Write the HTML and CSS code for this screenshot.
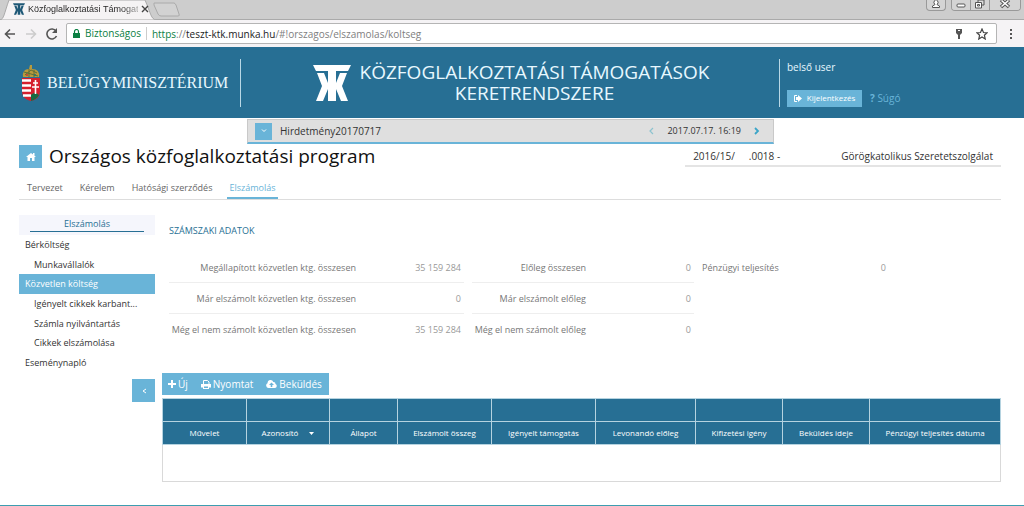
FILE: index.html
```html
<!DOCTYPE html>
<html lang="hu">
<head>
<meta charset="utf-8">
<title>Közfoglalkoztatási Támogatások Keretrendszere</title>
<link rel="stylesheet" href="styles.css">
</head>
<body>
<svg class="defs" aria-hidden="true">
  <symbol id="ktk" viewBox="0 0 38 36"><path d="M0 0H38L35 6H23V36H15V24L10 36H3L9 21L4 8H11L15 18V6H3ZM23 18L27 8H34L29 21L35 36H28L23 24Z" fill="currentColor"/></symbol>
</svg>
<div class="browser">
  <div class="tabstrip">
    <svg class="tab-shape" viewBox="0 0 184 20" aria-hidden="true"><path d="M0 20C4 19 4 14 9 0H145C151 14 151 19 156 20Z" fill="#f5f3f4" stroke="#aaa"/><path d="M154 3H174Q175 3 176 5L179 14Q180 16 178 16H161Q159 16 158 14L154 5Z" fill="#d2d2d2" stroke="#aaa"/></svg>
    <div class="tab"><svg class="favicon"><use href="#ktk"/></svg><span class="tab-title">Közfoglalkoztatási Támogat</span>
      <button class="plain" aria-label="Lap bezárása"><svg width="8" height="8" viewBox="0 0 8 8"><path d="M1 1L7 7M7 1L1 7" stroke="#444" stroke-width="1.4"/></svg></button></div>
    <div class="window-buttons">
      <button class="user-btn" aria-label="Felhasználó"><svg width="18" height="11" viewBox="0 0 18 11"><path d="M5.500 7.500V6L8 4.500A2 2.500 0 1 1 10 4.500L12.500 6V7.500Z" fill="#fff" stroke="#555"/></svg></button>
      <div class="group">
        <button aria-label="Kis méret"><svg width="18" height="11" viewBox="0 0 18 11"><rect x="5" y="4" width="8" height="3" rx="1" fill="#fff" stroke="#555"/></svg></button>
        <button aria-label="Előző méret"><svg width="18" height="11" viewBox="0 0 18 11"><path d="M7 0H13V5H7Z" fill="#ddd" stroke="#555"/><path d="M4.500 2.500H10.500V8H4.500ZM6.500 4.500H8.500V6H6.500Z" fill="#fff" stroke="#555"/></svg></button>
        <button class="wide" aria-label="Bezárás"><svg width="30" height="11" viewBox="0 0 30 11"><path d="M11 0L19 7M19 0L11 7" stroke="#555" stroke-width="3.500"/><path d="M11.500 .5L18.500 6.500M18.500 .5L11.500 6.500" stroke="#fff" stroke-width="1.500"/></svg></button>
      </div>
    </div>
  </div>
  <div class="toolbar">
    <button class="plain" aria-label="Vissza"><svg width="12" height="12" viewBox="0 0 12 12"><path d="M11 6H2M6 1.500L1.500 6L6 10.500" fill="none" stroke="#555" stroke-width="1.600"/></svg></button>
    <button class="plain" aria-label="Előre"><svg width="12" height="12" viewBox="0 0 12 12"><path d="M1 6H10M6 1.500L10.500 6L6 10.500" fill="none" stroke="#ccc" stroke-width="1.600"/></svg></button>
    <button class="plain" aria-label="Újratöltés"><svg width="12" height="12" viewBox="0 0 12 12"><path d="M10 3A5 5 0 1 0 10.500 8" fill="none" stroke="#555" stroke-width="1.600"/><path d="M11 0V5H6Z" fill="#555"/></svg></button>
    <div class="address">
      <svg width="7" height="10" viewBox="0 0 7 10"><path d="M1.500 4V2.500A2 2 0 0 1 5.500 2.500V4" fill="none" stroke="#0b8043" stroke-width="1.200"/><rect y="4" width="7" height="5" fill="#0b8043"/></svg>
      <span class="secure">Biztonságos</span>
      <span class="url"><span class="green">https</span>://<b>teszt-ktk.munka.hu</b>/#!orszagos/elszamolas/koltseg</span>
      <svg width="8" height="10" viewBox="0 0 8 10"><path d="M1 0H7V4L5 6V10H3V6L1 4Z" fill="#555"/><path d="M3 1.500H5" stroke="#fff"/></svg>
      <svg width="12" height="12" viewBox="0 0 12 12"><path d="M6 1L7.500 4.500L11 4.800L8.400 7.200L9.200 11L6 9L2.800 11L3.600 7.200L1 4.800L4.500 4.500Z" fill="none" stroke="#444" stroke-width="1.200"/></svg>
    </div>
    <button class="plain menu" aria-label="Menü"><svg width="4" height="12" viewBox="0 0 4 12"><path d="M1 1H3V3H1ZM1 5H3V7H1ZM1 9H3V11H1Z" fill="#555"/></svg></button>
  </div>
</div>

<header class="header">
  <div class="ministry">
    <svg width="20" height="38" viewBox="0 0 20 38" role="img" aria-label="Magyarország címere">
      <path d="M2 13Q1 5 8 5L9 1H11L11 5Q19 5 18 13Z" fill="#b99a3c"/><path d="M3 8L17 12M4 11L10 6L16 9M8 5L8 13M13 6V13" stroke="#5e6d39" fill="none"/><circle cx="6" cy="11" r="1" fill="#c33"/><circle cx="14" cy="11" r="1" fill="#277"/>
      <path d="M1 14H19V27Q19 35 10 37Q1 35 1 27Z" fill="#d5202e"/>
      <path d="M1 16.500H10M1 21.500H10M1 26.500H10M2 31.500H10" stroke="#fff" stroke-width="2.500"/>
      <path d="M10 31Q14 27 18 31Q16 35 10 37Z" fill="#176b43"/><path d="M14.500 16V30M12 19H17M11 23H18" stroke="#fff" stroke-width="1.600"/>
    </svg>
    <span>BELÜGYMINISZTÉRIUM</span>
  </div>
  <div class="brand"><svg class="brand-logo" role="img" aria-label="KTK"><use href="#ktk"/></svg><div class="brand-name"><div>KÖZFOGLALKOZTATÁSI TÁMOGATÁSOK</div><div>KERETRENDSZERE</div></div></div>
  <div class="account">
    <div>belső user</div>
    <div class="account-actions">
      <button class="logout"><svg width="8" height="7" viewBox="0 0 8 7"><path d="M3 .5H.5V6.500H3" fill="none" stroke="#fff"/><path d="M2 2H4V0L8 3.500L4 7V5H2Z" fill="#fff"/></svg>Kijelentkezés</button>
      <a class="help" href="#"><b>?</b> Súgó</a>
    </div>
  </div>
</header>

<div class="notice">
  <button class="notice-open" aria-label="Lenyitás"><svg width="6" height="4" viewBox="0 0 6 4"><path d="M1 .5L3 2.500L5 .5" fill="none" stroke="#fff"/></svg></button>
  <span class="notice-title">Hirdetmény20170717</span>
  <button class="plain" aria-label="Előző"><svg width="6" height="8" viewBox="0 0 6 8"><path d="M5 1L2 4L5 7" fill="none" stroke="#8cc3cf" stroke-width="1.200"/></svg></button>
  <time>2017.07.17. 16:19</time>
  <button class="plain" aria-label="Következő"><svg width="6" height="8" viewBox="0 0 6 8"><path d="M1 1L4 4L1 7" fill="none" stroke="#3ba5c8" stroke-width="1.800"/></svg></button>
</div>

<main class="page">
  <div class="heading">
    <button class="square" aria-label="Kezdőlap"><svg width="10" height="8" viewBox="0 0 10 8"><path d="M0 4L5 0L7 1.500V0H8.500V2.800L10 4H8.500V8H6V5H4V8H1.500V4Z" fill="#fff"/></svg></button>
    <h1>Országos közfoglalkoztatási program</h1>
    <div class="case"><span>2016/15/</span><span class="case-no">.0018 -</span><span>Görögkatolikus Szeretetszolgálat</span></div>
  </div>
  <nav class="tabs"><a href="#">Tervezet</a><a href="#">Kérelem</a><a href="#">Hatósági szerződés</a><a href="#" class="active">Elszámolás</a></nav>
  <div class="body">
    <aside class="sidebar">
      <h2><span>Elszámolás</span></h2>
      <nav class="side-nav">
        <a href="#">Bérköltség</a><a href="#" class="sub">Munkavállalók</a><a href="#" class="selected">Közvetlen költség</a><a href="#" class="sub">Igényelt cikkek karbant...</a><a href="#" class="sub">Számla nyilvántartás</a><a href="#" class="sub">Cikkek elszámolása</a><a href="#">Eseménynapló</a>
      </nav>
      <button class="square" aria-label="Összecsukás"><svg width="6" height="8" viewBox="0 0 6 8"><path d="M5 2L2 4L5 6" fill="none" stroke="#fff"/></svg></button>
    </aside>
    <section class="content">
      <h3>SZÁMSZAKI ADATOK</h3>
      <div class="figures">
        <dl class="first"><div><dt>Megállapított közvetlen ktg. összesen</dt><dd>35 159 284</dd></div><div><dt>Már elszámolt közvetlen ktg. összesen</dt><dd>0</dd></div><div><dt>Még el nem számolt közvetlen ktg. összesen</dt><dd>35 159 284</dd></div></dl>
        <dl class="second"><div><dt>Előleg összesen</dt><dd>0</dd></div><div><dt>Már elszámolt előleg</dt><dd>0</dd></div><div><dt>Még el nem számolt előleg</dt><dd>0</dd></div></dl>
        <dl class="third"><div><dt>Pénzügyi teljesítés</dt><dd>0</dd></div></dl>
      </div>
      <div class="actions">
        <button><svg width="8" height="8" viewBox="0 0 8 8"><path d="M3 0H5V3H8V5H5V8H3V5H0V3H3Z" fill="#fff"/></svg>Új</button>
        <button><svg width="10" height="9" viewBox="0 0 10 9"><path d="M2.500 4V.5H6.500L8 2V4" fill="none" stroke="#fff"/><path d="M0 4H10V7.500H8V9H2V7.500H0ZM3 6.500V8H7V6.500Z" fill="#fff" fill-rule="evenodd"/></svg>Nyomtat</button>
        <button><svg width="11" height="8" viewBox="0 0 11 8"><path d="M2.500 8A2.500 2.500 0 0 1 1.500 3.300A3 3 0 0 1 7.300 2A2 2 0 0 1 9.500 4A2.100 2.100 0 0 1 9 8ZM5.500 2.500L3 5H4.700V7H6.300V5H8Z" fill="#fff" fill-rule="evenodd"/></svg>Beküldés</button>
      </div>
      <table>
        <colgroup><col class="c-op"><col class="c-id"><col class="c-state"><col class="c-sum"><col class="c-grant"><col class="c-adv"><col class="c-date"><col class="c-date"><col></colgroup>
        <thead>
          <tr><td></td><td></td><td></td><td></td><td></td><td></td><td></td><td></td><td></td></tr>
          <tr><th>Művelet</th><th><span class="sort">Azonosító <svg width="5" height="3" viewBox="0 0 5 3"><path d="M0 0H5L2.500 3Z" fill="#fff"/></svg></span></th><th>Állapot</th><th>Elszámolt összeg</th><th>Igényelt támogatás</th><th>Levonandó előleg</th><th>Kifizetési igény</th><th>Beküldés ideje</th><th>Pénzügyi teljesítés dátuma</th></tr>
        </thead>
        <tbody><tr><td colspan="9"></td></tr></tbody>
      </table>
    </section>
  </div>
</main>
<footer class="footer"></footer>
</body>
</html>
```
FILE: styles.css
```css
* { box-sizing: border-box; }
body { margin: 0; min-height: 100vh; display: flex; flex-direction: column; background: #fff; color: #333; font: 10px/16px "Open Sans", sans-serif; }
button { font: inherit; color: inherit; border: 0; margin: 0; padding: 0; display: flex; align-items: center; justify-content: center; background: none; }
a { color: inherit; text-decoration: none; }
svg { flex: none; display: block; }
h1, h2, h3, dl, dd { margin: 0; font-weight: 400; }
.defs { position: absolute; width: 0; height: 0; }

.tabstrip { display: flex; position: relative; height: 20px; background: #cdcdcd; border-bottom: 1px solid #aaa; }
.tab-shape { position: absolute; left: 0; top: 0; width: 184px; height: 20px; }
.tab { position: relative; display: flex; align-items: center; width: 142px; padding-left: 13px; gap: 3px; margin-bottom: 2px; color: #222; }
.favicon { width: 12px; height: 12px; color: #1e5876; }
.tab-title { flex: 1; white-space: nowrap; font: 9px/16px "Liberation Sans", sans-serif; background: linear-gradient(90deg, #222 85%, #aaa); background-clip: text; -webkit-background-clip: text; color: transparent; }
.tab .plain { width: 8px; flex: none; }
.window-buttons { display: flex; gap: 5px; margin-left: auto; padding-right: 3px; height: 11px; }
.window-buttons button { height: 11px; background: #d4d4d4; }
.user-btn, .group { border: 1px solid #999; border-top: 0; border-radius: 0 0 4px 4px; }
.group { display: flex; overflow: hidden; }
.group button + button { border-left: 1px solid #999; }
.toolbar { display: flex; align-items: center; gap: 9px; height: 27px; padding: 2px 8px 2px 4px; background: #f5f3f5; }
.address { flex: 1; display: flex; align-items: center; gap: 5px; height: 21px; padding: 0 8px 0 6px; margin-left: -1px; border: 1px solid #b5b5b5; border-radius: 2px; background: #fff; color: #808080; }
.address svg + svg { margin-left: 8px; }
.secure { color: #0b8043; padding-right: 5px; border-right: 1px solid #ccc; line-height: 13px; }
.green { color: #0b8043; }
.url { flex: 1; }
.url b { font-weight: 400; color: #222; }
.menu { width: 10px; }

.header { display: grid; grid-template-columns: 241px 1fr 245px; align-items: center; height: 71px; background: #276f94; color: #e8f8ff; }
.ministry { display: flex; align-items: center; gap: 6px; height: 48px; padding-left: 21px; border-right: 1px solid #b9d8e6; font: 16px/24px "Liberation Serif", serif; white-space: nowrap; }
.brand { display: flex; justify-content: center; align-items: center; gap: 9px; padding-left: 2px; }
.brand-logo { width: 38px; height: 36px; color: #fff; }
.brand-name { font-size: 19px; line-height: 21px; text-align: center; white-space: nowrap; }
.account { display: flex; flex-direction: column; justify-content: space-between; height: 48px; padding-left: 7px; border-left: 1px solid #b9d8e6; }
.account-actions { display: flex; align-items: center; gap: 8px; }
.logout { gap: 5px; height: 17px; width: 75px; background: #69b4d8; color: #fff; font-size: 8px; }
.help { color: #69b4d8; }

.notice { display: flex; align-items: center; gap: 13px; width: 527px; height: 25px; margin: 1px 0 0 247px; padding: 0 13px 0 7px; background: #dfdfdf; border: solid #c9c9c9; border-width: 1px 1px 0; border-bottom: 2px solid #69b4d8; }
.notice-open { width: 17px; height: 17px; background: #69b4d8; margin-right: -5px; }
.notice-title { flex: 1; }
.notice time { font-size: 9px; }

.page { padding: 1px 23px 0 19px; }
.heading { display: flex; align-items: center; }
.square { width: 23px; height: 23px; background: #69b4d8; }
h1 { flex: 1; padding-left: 7px; font-size: 19px; line-height: 23px; color: #111; white-space: nowrap; }
.case { display: flex; height: 21px; padding: 2px 8px 0; border-bottom: 2px solid #e4e4e4; }
.case-no { padding: 0 61px 0 14px; }
.tabs { display: flex; gap: 17px; height: 32px; padding: 12px 8px 0; border-bottom: 1px solid #ddd; color: #666; font-size: 9px; }
.tabs .active { padding: 0 2px; margin-left: -2px; color: #69b4d8; border-bottom: 2px solid #69b4d8; }
.body { display: grid; grid-template-columns: 136px 1fr; gap: 7px; padding-top: 15px; }
.sidebar { font-size: 9px; }
.sidebar h2 { height: 20px; padding: 1px 11px; background: #f5f6fc; text-align: center; font-size: 9px; color: #276f94; }
.sidebar h2 span { display: block; border-bottom: 1px solid #276f94; line-height: 15px; }
.side-nav { display: flex; flex-direction: column; height: 138px; margin-bottom: 6px; }
.side-nav a { display: flex; flex: 1; align-items: center; padding: 0 6px; }
.side-nav .sub { padding-left: 15px; }
.side-nav .selected { background: #69b4d8; color: #fff; }
.sidebar .square { margin-left: auto; }
.content h3 { padding: 8px 7px 0; font-size: 9px; color: #276f94; }
.figures { display: flex; padding: 13px 7px 28px; gap: 8px; color: #777; font-size: 9px; }
.figures dl > div { display: flex; justify-content: space-between; height: 31px; padding: 8px 3px 0 0; border-bottom: 1px solid #eee; white-space: nowrap; }
.figures dl > div:last-child { border-bottom: 0; }
.figures dd { color: #999; }
.figures dt { text-align: right; }
.first { width: 295px; }
.first dt { width: 187px; }
.second { width: 222px; }
.second dt { width: 114px; }
.third { width: 187px; }
.actions { display: flex; width: max-content; height: 22px; gap: 13px; padding: 0 7px 0 6px; background: #69b4d8; color: #fff; }
.actions button { gap: 2px; }
table { width: 100%; margin-top: 3px; border-collapse: collapse; table-layout: fixed; border: 1px solid #d9d9d9; }
thead td, th { height: 23px; padding: 0; background: #276f94; border: 1px solid #b5d3e0; color: #fff; font-size: 8px; line-height: 12px; font-weight: 400; white-space: nowrap; }
tbody td { height: 37px; }
.sort { display: flex; align-items: center; justify-content: center; gap: 11px; }
.c-op { width: 84px; }
.c-id { width: 83px; }
.c-state { width: 68px; }
.c-sum { width: 94px; }
.c-grant { width: 104px; }
.c-adv { width: 100px; }
.c-date { width: 87px; }
.footer { margin-top: 23px; border-top: 1px solid #3d9db0; }
```
